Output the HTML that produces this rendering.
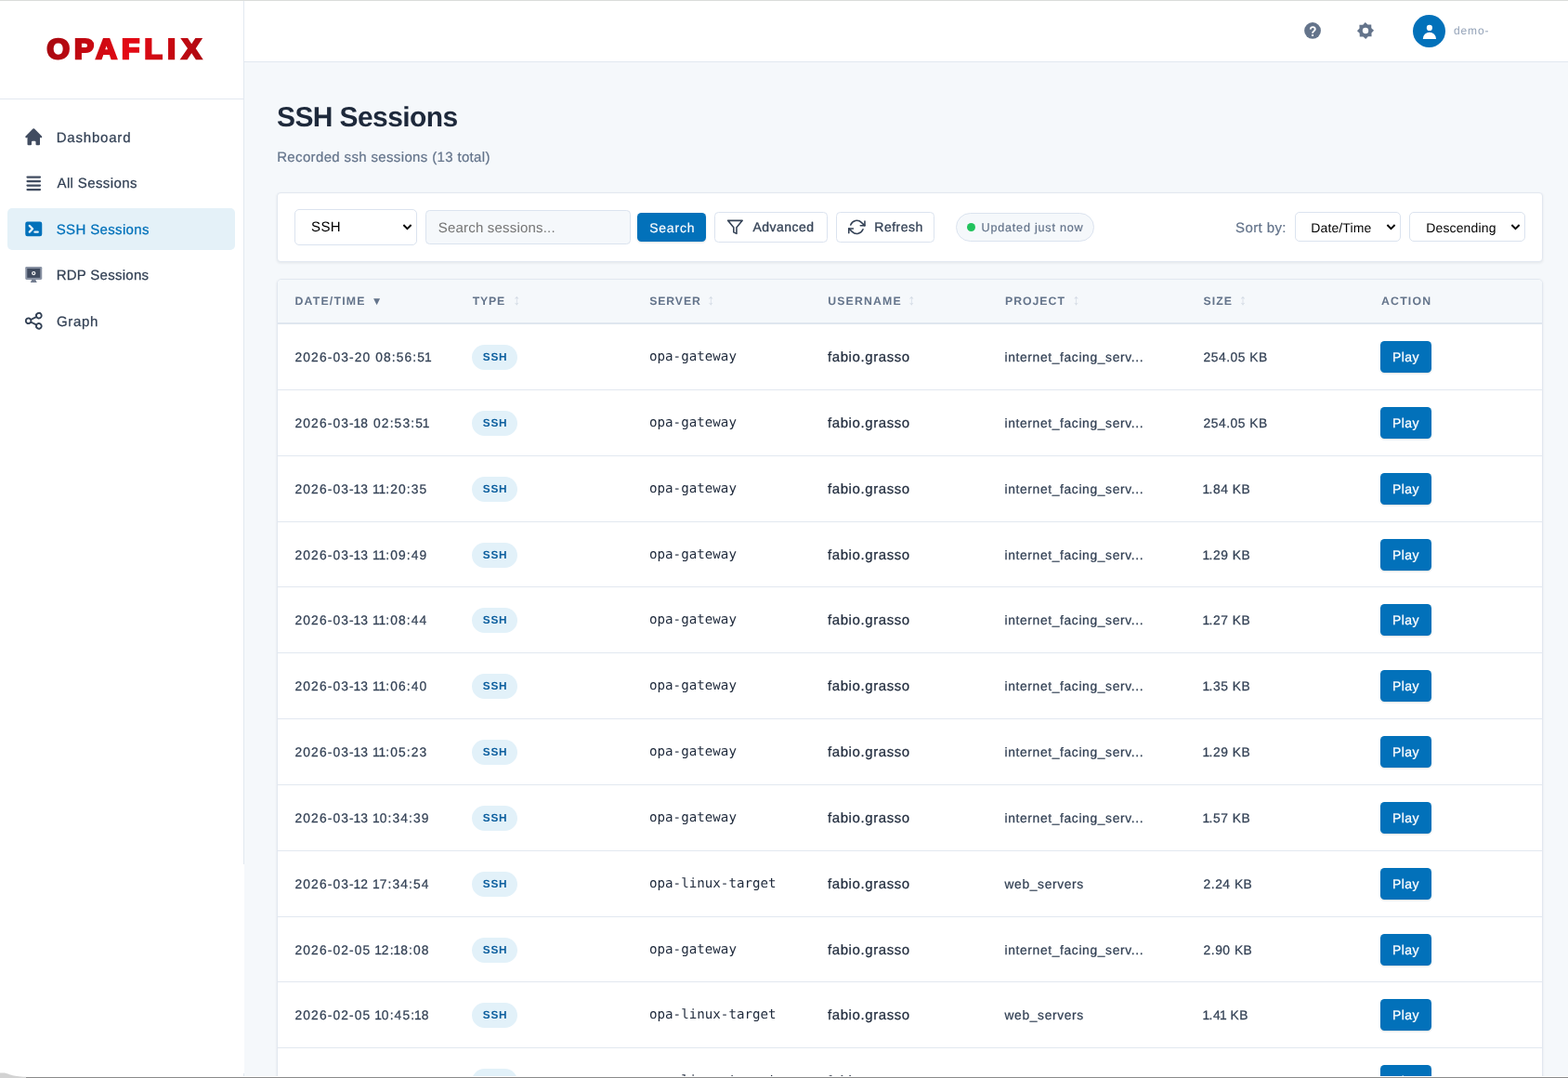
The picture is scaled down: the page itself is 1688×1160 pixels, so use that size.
<!DOCTYPE html>
<html lang="en">
<head>
<meta charset="utf-8">
<title>OPAFLIX - SSH Sessions</title>
<style>
*{box-sizing:border-box;margin:0;padding:0}
html,body{width:1688px;height:1160px;overflow:hidden;background:#f5f8fb}
body{font-family:"Liberation Sans",sans-serif;color:#1e293b;position:relative;will-change:transform;text-rendering:geometricPrecision}
.abs{position:absolute}
#topline{left:0;top:0;width:1688px;height:1px;background:#dadcda;z-index:50}
#botline{left:0;top:1158px;width:1688px;height:2px;background:linear-gradient(#fff 0,#fff 50%,#8a8a8a 50%,#8a8a8a 100%);z-index:50}
#sidebar{left:0;top:0;width:263px;height:1160px;background:#fff}
#sideborder{left:262px;top:0;width:1px;height:930px;background:#e2e8f0}
#logo{left:0;top:1px;width:262px;height:106px;border-bottom:1px solid #e2e8f0}
.nav{left:8px;width:245px;height:45px;border-radius:5px}
.nav svg{position:absolute;left:17px;top:11px;width:22.5px;height:22.5px}
.nav span{-webkit-text-stroke:.25px currentColor;position:absolute;left:53px;top:.7px;line-height:46px;font-size:15px;color:#334155;letter-spacing:.55px;white-space:nowrap}
.nav.active{background:#e4f1f8}
.nav.active span{color:#0271ba}
#header{left:263px;top:1px;width:1425px;height:66px;background:#fff;border-bottom:1px solid #e2e8f0}
h1{left:298px;top:107px;font-size:30px;line-height:40px;font-weight:700;color:#1e293b;letter-spacing:-.6px;white-space:nowrap}
#sub{left:298.200px;top:159.500px;font-size:15px;line-height:20px;color:#64748b;letter-spacing:.35px;white-space:nowrap}
.card{background:#fff;border:1px solid #e2e8f0;border-radius:4px;box-shadow:0 1px 3px rgba(15,23,42,.08)}
#filter{left:298px;top:207px;width:1363px;height:75px}
.sel{background:#fff;border:1px solid #dbe3ef;border-radius:5px;color:#000;font-size:14px;white-space:nowrap}
.sel span{position:absolute;top:0}
.chev{position:absolute}
.btn{border-radius:4.500px;font-size:14px;white-space:nowrap}
.btn.primary{background:#0271ba;color:#fff;box-shadow:0 1px 2px rgba(15,23,42,.15)}
.btn.ghost{background:#fff;border:1px solid #dbe3ef;color:#334155}
.btn span{position:absolute;top:0;-webkit-text-stroke:.3px currentColor}
#sub,#t_sort,#t_upd{-webkit-text-stroke:.2px currentColor}
#table{left:298px;top:300px;width:1363px;height:900px;overflow:hidden;border-radius:5px 5px 0 0}
#thead{left:0;top:0;width:1361px;height:48px;background:#f5f8fb;border-bottom:2px solid #dfe6ef}
.th{top:0;line-height:46.500px;font-size:12.300px;font-weight:700;color:#64748b;letter-spacing:1.05px;white-space:nowrap}
.th i{position:absolute;top:-.5px;font-style:normal;font-weight:400;color:#d3dae4;font-size:16px;letter-spacing:0;margin-left:-1.500px}
.th b{position:absolute;top:-.3px;font-size:11.800px;letter-spacing:0;font-weight:400;color:#64748b}
.row{left:0;width:1361px;height:71px;border-bottom:1px solid #e2e8f0}
.row>div{-webkit-text-stroke:.25px currentColor;position:absolute;white-space:nowrap;top:.8px;line-height:70px;font-size:13.800px;color:#334155}
.row i{font-style:normal;margin:0 -1.100px}
.c1{left:18.500px;letter-spacing:1.12px}
.c2{-webkit-text-stroke:0 !important;left:209px;top:22px !important;height:27px;width:49.300px;border-radius:13.500px;background:#e2f1f9;line-height:27px !important;text-align:center;font-size:11.800px !important;font-weight:700;color:#0f609f !important;letter-spacing:.75px;text-indent:.75px}
.c3{-webkit-text-stroke:0 !important;left:400px;font-family:"DejaVu Sans Mono","Liberation Mono",monospace;font-size:14.200px !important;color:#1e293b !important;line-height:68px !important;top:1px !important}
.c4{left:592px;font-size:15px !important;color:#1e293b !important;letter-spacing:.59px}
.c5{left:782.500px;letter-spacing:.65px}
.c6{left:996.600px;letter-spacing:.52px}
.c7{left:1187px;top:18px !important;width:55px;height:34px;border-radius:4.500px;background:#0271ba;color:#fff !important;line-height:34.600px !important;text-align:center;letter-spacing:.4px;font-size:14px !important;box-shadow:0 1px 2px rgba(15,23,42,.15)}
</style>
</head>
<body>
<div id="sidebar" class="abs"></div>
<div id="sideborder" class="abs"></div>
<div id="logo" class="abs"></div>
<svg class="abs" style="left:0;top:0" width="262" height="106" viewBox="0 0 262 106"><defs><linearGradient id="lg" gradientUnits="userSpaceOnUse" x1="50" y1="30" x2="219" y2="76"><stop offset="0" stop-color="#a50910"/><stop offset=".5" stop-color="#e50914"/><stop offset="1" stop-color="#a50910"/></linearGradient></defs><text id="logotext" transform="scale(1.04,1)" x="48.60 76.95 99.37 125.99 149.56 173.32 188.34" y="63.3" font-family="Liberation Sans, sans-serif" font-weight="700" font-size="30.2" fill="url(#lg)" stroke="url(#lg)" stroke-width="2.5" stroke-linejoin="miter" stroke-miterlimit="10">OPAFLIX</text></svg>

<div class="nav abs" style="top:125px"><svg viewBox="0 0 20 20" fill="#414c60"><path d="M10.707 2.293a1 1 0 00-1.414 0l-7 7a1 1 0 001.414 1.414L4 10.414V17a1 1 0 001 1h2a1 1 0 001-1v-2a1 1 0 011-1h2a1 1 0 011 1v2a1 1 0 001 1h2a1 1 0 001-1v-6.586l.293.293a1 1 0 001.414-1.414l-7-7z"/></svg><span style="left:52.700px;letter-spacing:.80px">Dashboard</span></div>
<div class="nav abs" style="top:174.600px"><svg viewBox="0 0 20 20" fill="#414c60"><path fill-rule="evenodd" d="M3 4a1 1 0 011-1h12a1 1 0 110 2H4a1 1 0 01-1-1zm0 4a1 1 0 011-1h12a1 1 0 110 2H4a1 1 0 01-1-1zm0 4a1 1 0 011-1h12a1 1 0 110 2H4a1 1 0 01-1-1zm0 4a1 1 0 011-1h12a1 1 0 110 2H4a1 1 0 01-1-1z" clip-rule="evenodd"/></svg><span style="left:53.500px;letter-spacing:.38px">All Sessions</span></div>
<div class="nav active abs" style="top:224px"><svg viewBox="0 0 20 20" fill="#0271ba"><path fill-rule="evenodd" d="M2 5a2 2 0 012-2h12a2 2 0 012 2v10a2 2 0 01-2 2H4a2 2 0 01-2-2V5zm3.293 1.293a1 1 0 011.414 0l3 3a1 1 0 010 1.414l-3 3a1 1 0 01-1.414-1.414L7.586 10 5.293 7.707a1 1 0 010-1.414zM11 12a1 1 0 100 2h3a1 1 0 100-2h-3z" clip-rule="evenodd"/></svg><span style="left:52.700px;letter-spacing:.36px">SSH Sessions</span></div>
<div class="nav abs" style="top:273px"><svg viewBox="0 0 20 20"><rect x="2" y="2.6" width="16" height="12.4" rx="1.2" fill="#8a93a4"/><rect x="3.8" y="4.4" width="12.4" height="8.8" fill="#404b5f"/><path d="M8.2 15h3.6l1.3 2.8H6.9z" fill="#737d90"/><circle cx="10" cy="8.9" r="1.9" fill="#fff"/><circle cx="10" cy="8.9" r=".8" fill="#404b5f"/></svg><span style="left:52.700px;letter-spacing:.26px">RDP Sessions</span></div>
<div class="nav abs" style="top:323px"><svg viewBox="0 0 24 24" fill="none" stroke="#334155" stroke-width="2" stroke-linecap="round" stroke-linejoin="round"><path d="M8.684 13.342C8.886 12.938 9 12.482 9 12c0-.482-.114-.938-.316-1.342m0 2.684a3 3 0 110-2.684m0 2.684l6.632 3.316m-6.632-6l6.632-3.316m0 0a3 3 0 105.367-2.684 3 3 0 00-5.367 2.684zm0 9.316a3 3 0 105.368 2.684 3 3 0 00-5.368-2.684z"/></svg><span style="left:52.900px;letter-spacing:.68px">Graph</span></div>

<div id="header" class="abs"></div>
<svg class="abs" style="left:1403px;top:23px;width:20px;height:20px" viewBox="0 0 20 20"><circle cx="10.050" cy="9.950" r="8.900" fill="#64748b"/><text transform="translate(10.300 15.900) scale(.86 1)" x="0" y="0" text-anchor="middle" font-family="Liberation Sans, sans-serif" font-weight="700" font-size="15.500" fill="#fff">?</text></svg>
<svg class="abs" style="left:1460px;top:23px;width:20px;height:20px" viewBox="-10 -10 20 20"><path fill="#64748b" fill-rule="evenodd" transform="rotate(-1.500)" d="M-6.400 -6.400 L-2.650 -6.400 L0 -9.050 L2.650 -6.400 L6.400 -6.400 L6.400 -2.650 L9.050 0 L6.400 2.650 L6.400 6.400 L2.650 6.400 L0 9.050 L-2.650 6.400 L-6.400 6.400 L-6.400 2.650 L-9.050 0 L-6.400 -2.650 Z M3.200 0 A3.200 3.200 0 1 0 -3.200 0 A3.200 3.200 0 1 0 3.200 0 Z"/></svg>
<div class="abs" style="left:1521px;top:16px;width:35px;height:35px;border-radius:50%;background:#0271ba"></div>
<svg class="abs" style="left:1521px;top:16px;width:35px;height:35px" viewBox="0 0 35 35"><circle cx="17.9" cy="13.9" r="3.1" fill="#fff"/><path d="M10.8 26 a7.1 7.3 0 0 1 14.2 0z" fill="#fff"/></svg>
<div class="abs" style="left:1565px;top:25px;font-size:12px;line-height:16px;color:#94a3b8;letter-spacing:.85px;white-space:nowrap">demo-</div>

<h1 class="abs">SSH Sessions</h1>
<div id="sub" class="abs">Recorded ssh sessions (13 total)</div>

<div id="filter" class="card abs">
  <div class="sel abs" style="left:18.400px;top:17.400px;width:132px;height:39px"><span style="left:16.600px;line-height:38px;font-size:15px;letter-spacing:.4px">SSH</span>
    <svg class="chev" style="left:114.400px;top:14px" width="11" height="9" viewBox="0 0 11 9"><path d="M1.400 2 L5.500 6.100 L9.600 2" fill="none" stroke="#000" stroke-width="1.9"/></svg></div>
  <div class="abs" style="left:159.300px;top:18.400px;width:220.500px;height:37px;background:#f5f8fb;border:1px solid #dbe3ef;border-radius:4.500px"><span id="ph" class="abs" style="left:12.500px;top:0;line-height:37px;font-size:15px;color:#757575;letter-spacing:.19px;white-space:nowrap">Search sessions...</span></div>
  <div class="btn primary abs" style="left:387px;top:21.100px;width:74px;height:30.600px"><span id="t_search" style="-webkit-text-stroke:.15px #fff;left:13.200px;line-height:33px;letter-spacing:.78px">Search</span></div>
  <div class="btn ghost abs" style="left:470.400px;top:20px;width:121.300px;height:32.500px">
    <svg class="abs" style="left:12px;top:6.200px" width="18.760" height="18.760" viewBox="0 0 24 24" fill="none" stroke="#334155" stroke-width="2" stroke-linecap="round" stroke-linejoin="round"><polygon points="22 3 2 3 10 12.460 10 19 14 21 14 12.460 22 3"/></svg>
    <span id="t_adv" style="left:40px;line-height:30.500px;letter-spacing:.5px">Advanced</span></div>
  <div class="btn ghost abs" style="left:601.300px;top:20px;width:106.200px;height:32.500px">
    <svg class="abs" style="left:12px;top:6.200px" width="18.760" height="18.760" viewBox="0 0 24 24" fill="none" stroke="#334155" stroke-width="2" stroke-linecap="round" stroke-linejoin="round"><polyline points="23 4 23 10 17 10"/><polyline points="1 20 1 14 7 14"/><path d="M3.510 9a9 9 0 0 1 14.850-3.360L23 10M1 14l4.640 4.360A9 9 0 0 0 20.490 15"/></svg>
    <span id="t_ref" style="left:40px;line-height:30.500px;letter-spacing:.5px">Refresh</span></div>
  <div class="abs" style="left:730.100px;top:21.100px;width:148.700px;height:30.700px;border-radius:15.500px;background:#f5f8fb;border:1px solid #dbe3ef">
    <div class="abs" style="left:10.700px;top:9.700px;width:9.300px;height:9.300px;border-radius:50%;background:#22c35d"></div>
    <span id="t_upd" class="abs" style="left:26.500px;top:0;line-height:30px;font-size:12.600px;color:#64748b;letter-spacing:.78px;white-space:nowrap">Updated just now</span></div>
  <span id="t_sort" class="abs" style="left:1031px;top:21px;line-height:34px;font-size:15px;color:#64748b;letter-spacing:.4px;white-space:nowrap">Sort by:</span>
  <div class="sel abs" style="left:1094.500px;top:20px;width:114.200px;height:32px"><span id="t_dt" style="left:16.800px;line-height:32.500px;letter-spacing:.12px">Date/Time</span>
    <svg class="chev" style="left:97.600px;top:11px" width="11" height="9" viewBox="0 0 11 9"><path d="M1.400 2 L5.500 6.100 L9.600 2" fill="none" stroke="#000" stroke-width="1.900"/></svg></div>
  <div class="sel abs" style="left:1218.400px;top:20px;width:124.200px;height:32px"><span id="t_desc" style="left:16.800px;line-height:32.500px;letter-spacing:.15px">Descending</span>
    <svg class="chev" style="left:108px;top:11px" width="11" height="9" viewBox="0 0 11 9"><path d="M1.400 2 L5.500 6.100 L9.600 2" fill="none" stroke="#000" stroke-width="1.900"/></svg></div>
</div>

<div id="table" class="card abs">
  <div id="thead" class="abs">
    <div class="th abs" style="left:18.500px;letter-spacing:1.19px">DATE/TIME<b style="left:82.300px">▼</b></div>
    <div class="th abs" style="left:209.700px;letter-spacing:.8px">TYPE<i style="left:45px">↕</i></div>
    <div class="th abs" style="left:400.300px;letter-spacing:.83px">SERVER<i style="left:63.500px">↕</i></div>
    <div class="th abs" style="left:592.200px;letter-spacing:1.15px">USERNAME<i style="left:87.500px">↕</i></div>
    <div class="th abs" style="left:783px;letter-spacing:.97px">PROJECT<i style="left:74px">↕</i></div>
    <div class="th abs" style="left:996.600px">SIZE<i style="left:40px">↕</i></div>
    <div class="th abs" style="left:1188px;letter-spacing:1.19px">ACTION</div>
  </div>
  <div class="row abs" style="top:48px"><div class="c1">2026-03-20 08:56:5<i>1</i></div><div class="c2">SSH</div><div class="c3">opa-gateway</div><div class="c4">fabio.grasso</div><div class="c5">internet_facing_serv...</div><div class="c6">254.05 KB</div><div class="c7">Play</div></div>
  <div class="row abs" style="top:119px"><div class="c1">2026-03-<i>1</i>8 02:53:5<i>1</i></div><div class="c2">SSH</div><div class="c3">opa-gateway</div><div class="c4">fabio.grasso</div><div class="c5">internet_facing_serv...</div><div class="c6">254.05 KB</div><div class="c7">Play</div></div>
  <div class="row abs" style="top:190px"><div class="c1">2026-03-<i>1</i>3 <i>1</i><i>1</i>:20:35</div><div class="c2">SSH</div><div class="c3">opa-gateway</div><div class="c4">fabio.grasso</div><div class="c5">internet_facing_serv...</div><div class="c6"><i>1</i>.84 KB</div><div class="c7">Play</div></div>
  <div class="row abs" style="top:261px;height:70px"><div class="c1">2026-03-<i>1</i>3 <i>1</i><i>1</i>:09:49</div><div class="c2">SSH</div><div class="c3">opa-gateway</div><div class="c4">fabio.grasso</div><div class="c5">internet_facing_serv...</div><div class="c6"><i>1</i>.29 KB</div><div class="c7">Play</div></div>
  <div class="row abs" style="top:331px"><div class="c1">2026-03-<i>1</i>3 <i>1</i><i>1</i>:08:44</div><div class="c2">SSH</div><div class="c3">opa-gateway</div><div class="c4">fabio.grasso</div><div class="c5">internet_facing_serv...</div><div class="c6"><i>1</i>.27 KB</div><div class="c7">Play</div></div>
  <div class="row abs" style="top:402px"><div class="c1">2026-03-<i>1</i>3 <i>1</i><i>1</i>:06:40</div><div class="c2">SSH</div><div class="c3">opa-gateway</div><div class="c4">fabio.grasso</div><div class="c5">internet_facing_serv...</div><div class="c6"><i>1</i>.35 KB</div><div class="c7">Play</div></div>
  <div class="row abs" style="top:473px"><div class="c1">2026-03-<i>1</i>3 <i>1</i><i>1</i>:05:23</div><div class="c2">SSH</div><div class="c3">opa-gateway</div><div class="c4">fabio.grasso</div><div class="c5">internet_facing_serv...</div><div class="c6"><i>1</i>.29 KB</div><div class="c7">Play</div></div>
  <div class="row abs" style="top:544px"><div class="c1">2026-03-<i>1</i>3 <i>1</i>0:34:39</div><div class="c2">SSH</div><div class="c3">opa-gateway</div><div class="c4">fabio.grasso</div><div class="c5">internet_facing_serv...</div><div class="c6"><i>1</i>.57 KB</div><div class="c7">Play</div></div>
  <div class="row abs" style="top:615px"><div class="c1">2026-03-<i>1</i>2 <i>1</i>7:34:54</div><div class="c2">SSH</div><div class="c3">opa-linux-target</div><div class="c4">fabio.grasso</div><div class="c5">web_servers</div><div class="c6">2.24 KB</div><div class="c7">Play</div></div>
  <div class="row abs" style="top:686px;height:70px"><div class="c1">2026-02-05 <i>1</i>2:<i>1</i>8:08</div><div class="c2">SSH</div><div class="c3">opa-gateway</div><div class="c4">fabio.grasso</div><div class="c5">internet_facing_serv...</div><div class="c6">2.90 KB</div><div class="c7">Play</div></div>
  <div class="row abs" style="top:756px"><div class="c1">2026-02-05 <i>1</i>0:45:<i>1</i>8</div><div class="c2">SSH</div><div class="c3">opa-linux-target</div><div class="c4">fabio.grasso</div><div class="c5">web_servers</div><div class="c6"><i>1</i>.4<i>1</i> KB</div><div class="c7">Play</div></div>
  <div class="row abs" style="top:827px"><div class="c1">2026-02-05 <i>1</i>0:43:06</div><div class="c2">SSH</div><div class="c3">opa-linux-target</div><div class="c4">fabio.grasso</div><div class="c5">web_servers</div><div class="c6"><i>1</i>.38 KB</div><div class="c7">Play</div></div>
</div>

<div id="topline" class="abs"></div>
<div class="abs" style="left:262px;top:1155px;width:1px;height:3px;background:#e2e8f0;z-index:51"></div>
<div id="botline" class="abs"></div>
<svg class="abs" style="left:0;top:1150px;z-index:52" width="30" height="10" viewBox="0 0 30 10"><path d="M0 4.500 L5 4.500 C10 5.500 12 8.300 28 8.800 L28 10 L0 10Z" fill="#d2d2d2"/></svg>
</body>
</html>
